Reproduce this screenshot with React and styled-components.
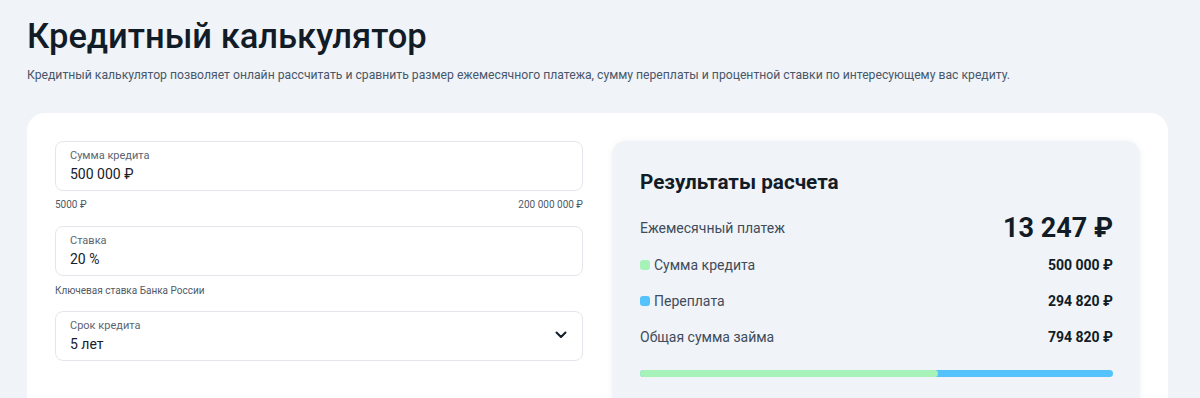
import React from 'react';
import styled, { createGlobalStyle } from 'styled-components';

const GlobalStyle = createGlobalStyle`
  body {
    margin: 0;
    background: #f0f3f8;
    font-family: Roboto, "Liberation Sans", sans-serif;
    color: #111c27;
  }
`;

const Page = styled.div`
  padding: 16px 32px 0 27px;
`;

const Title = styled.h1`
  margin: 0;
  font-size: 34.5px;
  line-height: 40px;
  font-weight: 500;
  color: #111c27;
`;

const Lead = styled.p`
  margin: 11px 0 0;
  font-size: 12.2px;
  line-height: 16px;
  color: #48576a;
`;

// white card with the two columns: the form and the results
const Card = styled.div`
  margin-top: 30px;
  background: #fff;
  border-radius: 18px;
  padding: 28px 28px 0;
  display: grid;
  grid-template-columns: 528px 528px;
  column-gap: 29px;
  height: 300px;
  box-sizing: border-box;
`;

const Form = styled.div`
  display: flex;
  flex-direction: column;
`;

const Field = styled.div`
  position: relative;
  height: 50px;
  box-sizing: border-box;
  border: 1px solid #e3e7ec;
  border-radius: 8px;
  padding: 7px 14px 0;
  margin-top: ${p => p.$top || 0}px;
`;

const FieldLabel = styled.div`
  font-size: 11px;
  line-height: 14px;
  color: #5b6572;
`;

const FieldValue = styled.div`
  margin-top: 2px;
  font-size: 14px;
  line-height: 18px;
  color: #16202b;
`;

const Hints = styled.div`
  display: flex;
  justify-content: space-between;
  margin-top: ${p => p.$top || 8}px;
  font-size: 10px;
  line-height: 13px;
  color: #4f5a66;
`;

const Chevron = styled.svg`
  position: absolute;
  right: 15px;
  top: 19px;
`;

// results panel on the right
const Results = styled.div`
  background: #f0f3f8;
  border-radius: 14px;
  padding: 28px 27px 0 28px;
  box-shadow: 0 0 6px rgba(30, 50, 80, 0.06);
`;

const ResultsTitle = styled.h2`
  margin: 0;
  font-size: 20.7px;
  line-height: 26px;
  font-weight: 700;
  color: #111c27;
`;

const Row = styled.div`
  display: flex;
  align-items: center;
  justify-content: space-between;
  height: ${p => p.$h || 36}px;
  margin-top: ${p => p.$top || 0}px;
`;

const RowLabel = styled.div`
  display: flex;
  align-items: center;
  font-size: 14px;
  color: #3f4c5b;
`;

const Dot = styled.span`
  flex: none;
  width: 10px;
  height: 10px;
  border-radius: 3px;
  margin-right: 4px;
  background: ${p => p.$color};
`;

const Amount = styled.div`
  font-size: ${p => (p.$big ? 27 : 14)}px;
  font-weight: 700;
  color: #111c27;
`;

const Bar = styled.div`
  margin-top: 15px;
  height: 7px;
  border-radius: 4px;
  background: #54c2fb;
  overflow: hidden;
`;

const BarFill = styled.div`
  height: 100%;
  background: #a6f2b9;
  border-radius: 0 4px 4px 0;
`;

const credit = 500000;
const over = 294820;

export default function App() {
  const share = (credit / (credit + over)) * 100;
  return (
    <>
      <GlobalStyle />
      <Page>
        <Title>Кредитный калькулятор</Title>
        <Lead>
          Кредитный калькулятор позволяет онлайн рассчитать и сравнить размер ежемесячного платежа, сумму переплаты и процентной ставки по интересующему вас кредиту.
        </Lead>
        <Card>
          <Form>
            <Field>
              <FieldLabel>Сумма кредита</FieldLabel>
              <FieldValue>500 000 ₽</FieldValue>
            </Field>
            <Hints $top={7}>
              <span>5000 ₽</span>
              <span>200 000 000 ₽</span>
            </Hints>
            <Field $top={15}>
              <FieldLabel>Ставка</FieldLabel>
              <FieldValue>20 %</FieldValue>
            </Field>
            <Hints>
              <span>Ключевая ставка Банка России</span>
            </Hints>
            <Field $top={14}>
              <FieldLabel>Срок кредита</FieldLabel>
              <FieldValue>5 лет</FieldValue>
              <Chevron width="12" height="8" viewBox="0 0 12 8">
                <path d="M1.5 1.5 L6 6 L10.5 1.5" fill="none" stroke="#111c27" strokeWidth="2" strokeLinecap="round" strokeLinejoin="round" />
              </Chevron>
            </Field>
          </Form>

          <Results>
            <ResultsTitle>Результаты расчета</ResultsTitle>
            <Row $h={38} $top={14}>
              <RowLabel>Ежемесячный платеж</RowLabel>
              <Amount $big>13 247 ₽</Amount>
            </Row>
            <Row>
              <RowLabel><Dot $color="#a6f2b9" />Сумма кредита</RowLabel>
              <Amount>500 000 ₽</Amount>
            </Row>
            <Row>
              <RowLabel><Dot $color="#54c2fb" />Переплата</RowLabel>
              <Amount>294 820 ₽</Amount>
            </Row>
            <Row>
              <RowLabel>Общая сумма займа</RowLabel>
              <Amount>794 820 ₽</Amount>
            </Row>
            <Bar>
              <BarFill style={{ width: `${share}%` }} />
            </Bar>
          </Results>
        </Card>
      </Page>
    </>
  );
}
